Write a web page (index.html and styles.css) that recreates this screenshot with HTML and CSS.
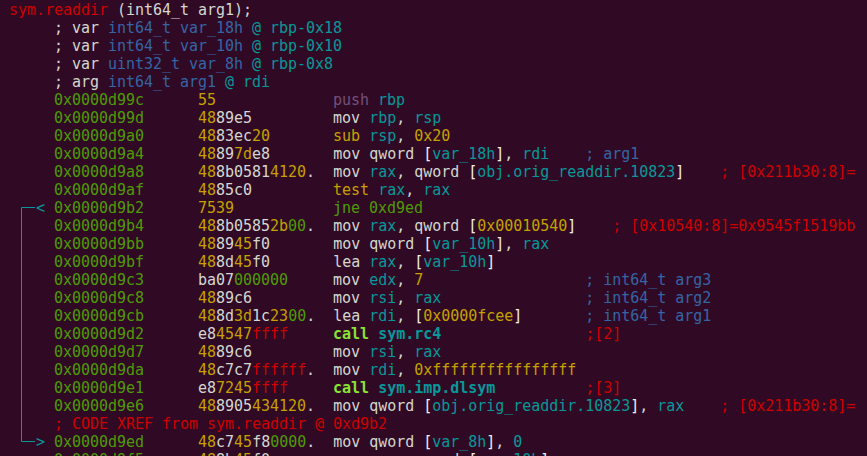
FILE: index.html
```html
<!DOCTYPE html>
<html>
<head>
<meta charset="utf-8">
<link rel="stylesheet" href="styles.css">
</head>
<body>
<div class="term">
<svg class="flow" width="40" height="456" viewBox="0 0 40 456"><path d="M35 207.5 H21.5 V441.5 H35" fill="none" stroke="#06989a" stroke-width="1"/></svg>
<div class="ln"> <span class="r">sym.readdir</span> <span class="w">(int64_t arg1);</span></div>
<div class="ln">      <span class="w">; var </span><span class="b">int64_t var_18h </span><span class="c">@ rbp-0x18</span></div>
<div class="ln">      <span class="w">; var </span><span class="b">int64_t var_10h </span><span class="c">@ rbp-0x10</span></div>
<div class="ln">      <span class="w">; var </span><span class="b">uint32_t var_8h </span><span class="c">@ rbp-0x8</span></div>
<div class="ln">      <span class="w">; arg </span><span class="b">int64_t arg1 </span><span class="c">@ rdi</span></div>
<div class="ln">      <span class="g">0x0000d99c</span>      <span class="y">55</span>             <span class="m">push</span> <span class="c">rbp</span></div>
<div class="ln">      <span class="g">0x0000d99d</span>      <span class="y">48</span><span class="w">89e5</span>         <span class="w">mov</span> <span class="c">rbp</span><span class="w">,</span> <span class="c">rsp</span></div>
<div class="ln">      <span class="g">0x0000d9a0</span>      <span class="y">48</span><span class="w">83ec</span><span class="y">20</span>       <span class="y">sub</span> <span class="c">rsp</span><span class="w">,</span> <span class="y">0x20</span></div>
<div class="ln">      <span class="g">0x0000d9a4</span>      <span class="y">48</span><span class="w">89</span><span class="y">7d</span><span class="w">e8</span>       <span class="w">mov qword </span><span class="bw">[</span><span class="c">var_18h</span><span class="bw">]</span><span class="w">,</span> <span class="c">rdi</span>    <span class="b">; arg1</span></div>
<div class="ln">      <span class="g">0x0000d9a8</span>      <span class="y">48</span><span class="w">8b0581</span><span class="y">4120</span><span class="w">.</span>  <span class="w">mov</span> <span class="c">rax</span><span class="w">, qword </span><span class="bw">[</span><span class="c">obj.orig_readdir.10823</span><span class="bw">]</span>    <span class="r">; [0x211b30:8]=</span></div>
<div class="ln">      <span class="g">0x0000d9af</span>      <span class="y">48</span><span class="w">85c0</span>         <span class="y">test</span> <span class="c">rax</span><span class="w">,</span> <span class="c">rax</span></div>
<div class="ln">    <span class="c">&lt;</span> <span class="g">0x0000d9b2</span>      <span class="y">7539</span>           <span class="g">jne 0xd9ed</span></div>
<div class="ln">      <span class="g">0x0000d9b4</span>      <span class="y">48</span><span class="w">8b0585</span><span class="y">2b</span><span class="g">00</span><span class="w">.</span>  <span class="w">mov</span> <span class="c">rax</span><span class="w">, qword </span><span class="bw">[</span><span class="y">0x00010540</span><span class="bw">]</span>    <span class="r">; [0x10540:8]=0x9545f1519bb</span></div>
<div class="ln">      <span class="g">0x0000d9bb</span>      <span class="y">48</span><span class="w">89</span><span class="y">45</span><span class="w">f0</span>       <span class="w">mov qword </span><span class="bw">[</span><span class="c">var_10h</span><span class="bw">]</span><span class="w">,</span> <span class="c">rax</span></div>
<div class="ln">      <span class="g">0x0000d9bf</span>      <span class="y">48</span><span class="w">8d</span><span class="y">45</span><span class="w">f0</span>       <span class="w">lea</span> <span class="c">rax</span><span class="w">, </span><span class="bw">[</span><span class="c">var_10h</span><span class="bw">]</span></div>
<div class="ln">      <span class="g">0x0000d9c3</span>      <span class="w">ba07</span><span class="g">000000</span>     <span class="w">mov</span> <span class="c">edx</span><span class="w">,</span> <span class="y">7</span>                  <span class="b">; int64_t arg3</span></div>
<div class="ln">      <span class="g">0x0000d9c8</span>      <span class="y">48</span><span class="w">89c6</span>         <span class="w">mov</span> <span class="c">rsi</span><span class="w">,</span> <span class="c">rax</span>                <span class="b">; int64_t arg2</span></div>
<div class="ln">      <span class="g">0x0000d9cb</span>      <span class="y">48</span><span class="w">8d</span><span class="y">3d</span><span class="w">1c</span><span class="y">23</span><span class="g">00</span><span class="w">.</span>  <span class="w">lea</span> <span class="c">rdi</span><span class="w">, </span><span class="bw">[</span><span class="y">0x0000fcee</span><span class="bw">]</span>       <span class="b">; int64_t arg1</span></div>
<div class="ln">      <span class="g">0x0000d9d2</span>      <span class="w">e8</span><span class="y">4547</span><span class="r">ffff</span>     <span class="G">call</span> <span class="cb">sym.rc4</span>                <span class="r">;[2]</span></div>
<div class="ln">      <span class="g">0x0000d9d7</span>      <span class="y">48</span><span class="w">89c6</span>         <span class="w">mov</span> <span class="c">rsi</span><span class="w">,</span> <span class="c">rax</span></div>
<div class="ln">      <span class="g">0x0000d9da</span>      <span class="y">48</span><span class="w">c7c7</span><span class="r">ffffff</span><span class="w">.</span>  <span class="w">mov</span> <span class="c">rdi</span><span class="w">,</span> <span class="y">0xffffffffffffffff</span></div>
<div class="ln">      <span class="g">0x0000d9e1</span>      <span class="w">e8</span><span class="y">7245</span><span class="r">ffff</span>     <span class="G">call</span> <span class="cb">sym.imp.dlsym</span>          <span class="r">;[3]</span></div>
<div class="ln">      <span class="g">0x0000d9e6</span>      <span class="y">48</span><span class="w">8905</span><span class="y">434120</span><span class="w">.</span>  <span class="w">mov qword </span><span class="bw">[</span><span class="c">obj.orig_readdir.10823</span><span class="bw">]</span><span class="w">,</span> <span class="c">rax</span>    <span class="r">; [0x211b30:8]=</span></div>
<div class="ln">      <span class="r">; CODE XREF from sym.readdir @ 0xd9b2</span></div>
<div class="ln">    <span class="c">&gt;</span> <span class="g">0x0000d9ed</span>      <span class="y">48</span><span class="w">c7</span><span class="y">45</span><span class="w">f8</span><span class="g">0000</span><span class="w">.</span>  <span class="w">mov qword </span><span class="bw">[</span><span class="c">var_8h</span><span class="bw">]</span><span class="w">,</span> <span class="c">0</span></div>
<div class="ln">      <span class="g">0x0000d9f5</span>      <span class="y">48</span><span class="w">8b</span><span class="y">45</span><span class="w">f0</span>       <span class="w">mov</span> <span class="c">rax</span><span class="w">, qword </span><span class="bw">[</span><span class="c">var_10h</span><span class="bw">]</span></div>
</div>
</body>
</html>
```
FILE: styles.css
```css
html, body {
  margin: 0;
  padding: 0;
  background: #300a24;
  overflow: hidden;
}
.term {
  position: relative;
  width: 867px;
  height: 456px;
  overflow: hidden;
  padding-top: 1px;
  box-sizing: border-box;
  font-family: "DejaVu Sans Mono", monospace;
  font-size: 15px;
  letter-spacing: -0.03px;
  line-height: 18px;
  color: #d3d7cf;
}
.flow {
  position: absolute;
  left: 0;
  top: 0;
}
.ln {
  white-space: pre;
  height: 18px;
}
.r { color: #cc0000; }
.w { color: #d3d7cf; }
.bw { color: #eeeeec; }
.b { color: #3465a4; }
.c { color: #06989a; }
.cb { color: #06989a; font-weight: bold; }
.g { color: #4e9a06; }
.G { color: #8ae234; font-weight: bold; }
.y { color: #c4a000; }
.m { color: #75507b; }
```
